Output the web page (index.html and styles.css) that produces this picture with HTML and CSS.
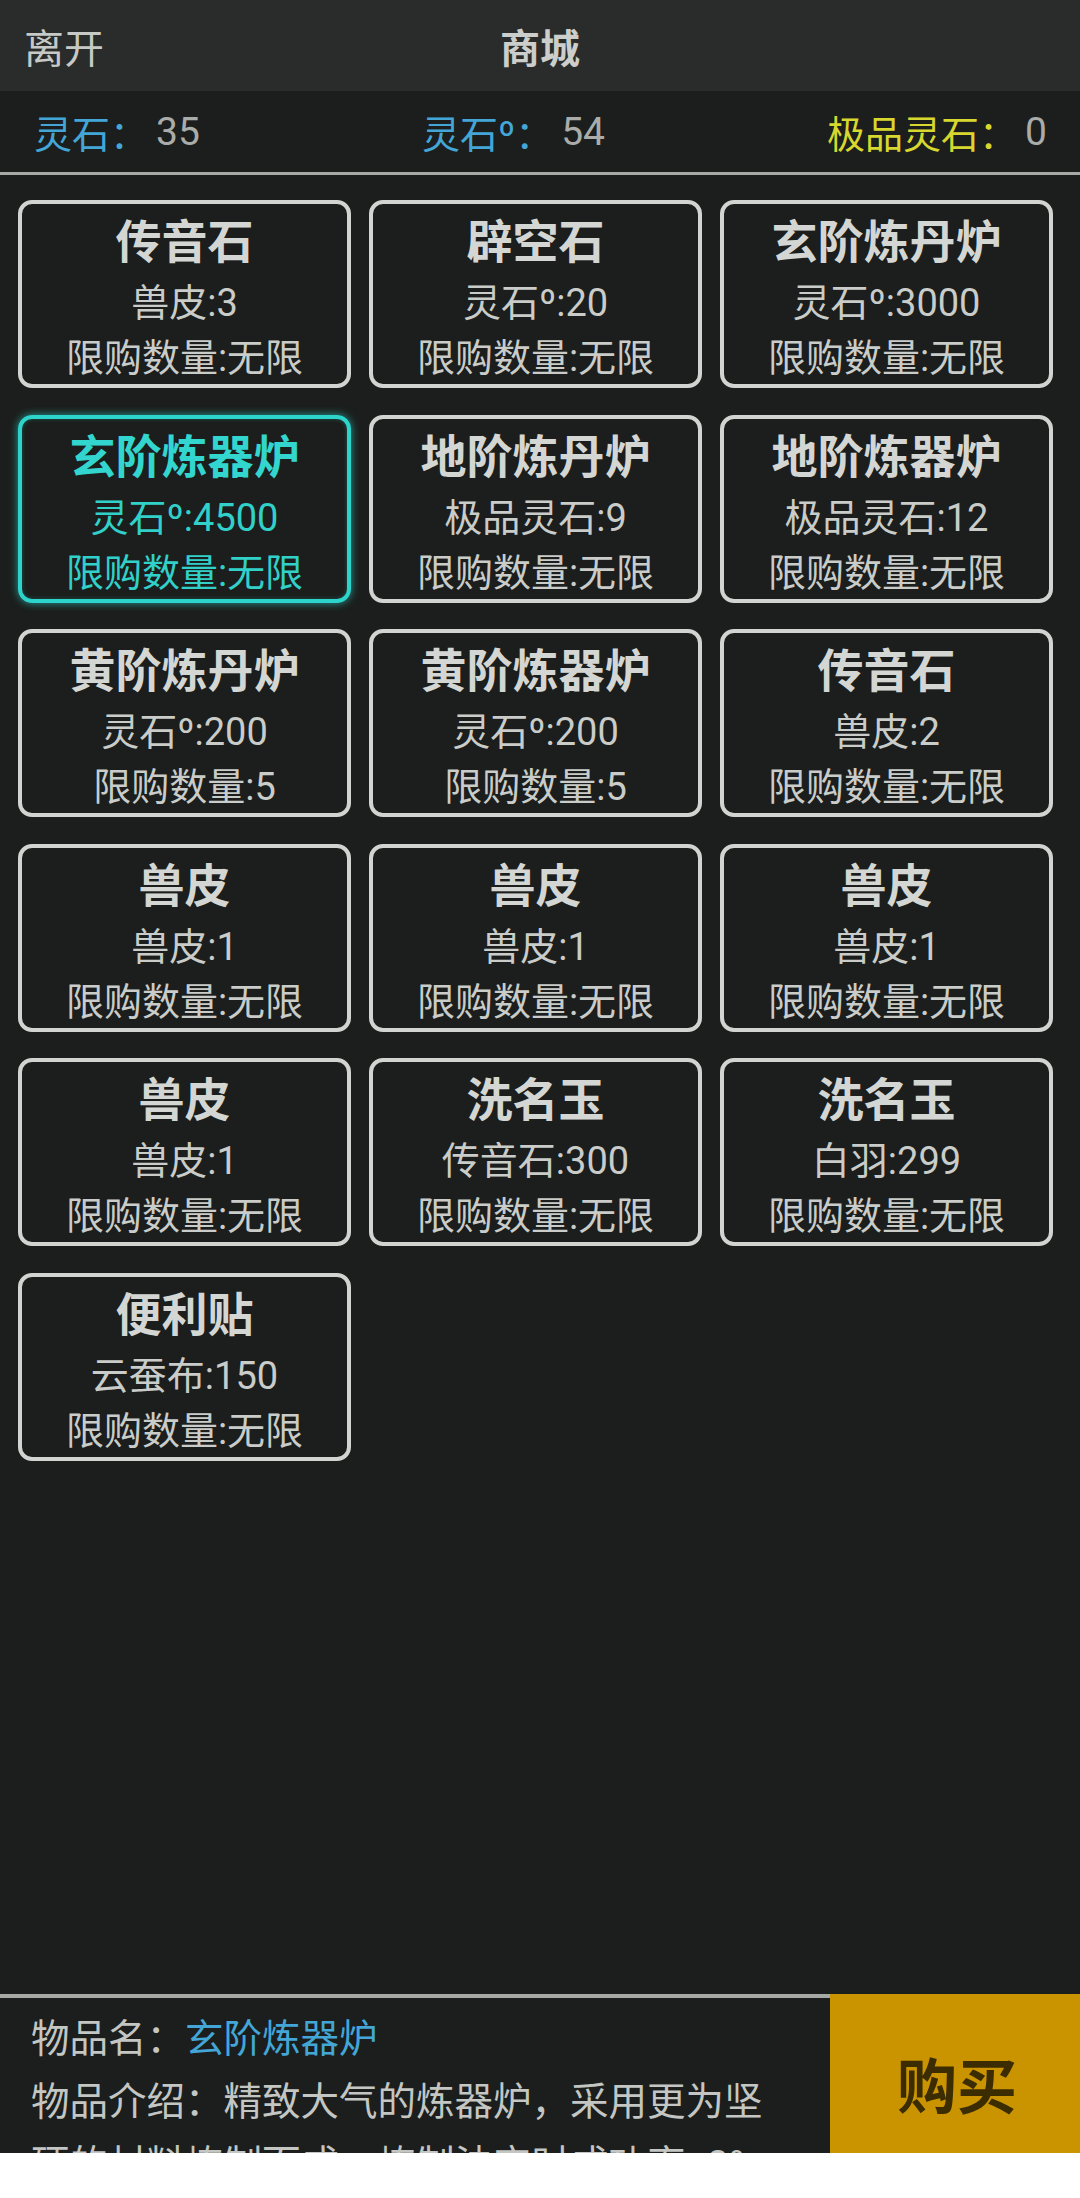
FILE: index.html
```html
<!DOCTYPE html>
<html lang="zh-CN">
<head>
<meta charset="utf-8">
<title>商城</title>
<link rel="stylesheet" href="styles.css">
</head>
<body>
<div class="viewport">
  <div class="app">
    <header class="topbar">
      <div class="back">离开</div>
      <div class="title">商城</div>
      <div class="spacer"></div>
    </header>
    <div class="currency">
      <div class="cur"><span class="lbl blue">灵石：</span><span class="num">35</span></div>
      <div class="cur"><span class="lbl blue">灵石º：</span><span class="num">54</span></div>
      <div class="cur"><span class="lbl yellow">极品灵石：</span><span class="num">0</span></div>
    </div>
    <main class="grid">
      <div class="card"><div class="name">传音石</div><div class="line">兽皮:3</div><div class="line">限购数量:无限</div></div>
      <div class="card"><div class="name">辟空石</div><div class="line">灵石º:20</div><div class="line">限购数量:无限</div></div>
      <div class="card"><div class="name">玄阶炼丹炉</div><div class="line">灵石º:3000</div><div class="line">限购数量:无限</div></div>
      <div class="card selected"><div class="name">玄阶炼器炉</div><div class="line">灵石º:4500</div><div class="line">限购数量:无限</div></div>
      <div class="card"><div class="name">地阶炼丹炉</div><div class="line">极品灵石:9</div><div class="line">限购数量:无限</div></div>
      <div class="card"><div class="name">地阶炼器炉</div><div class="line">极品灵石:12</div><div class="line">限购数量:无限</div></div>
      <div class="card"><div class="name">黄阶炼丹炉</div><div class="line">灵石º:200</div><div class="line">限购数量:5</div></div>
      <div class="card"><div class="name">黄阶炼器炉</div><div class="line">灵石º:200</div><div class="line">限购数量:5</div></div>
      <div class="card"><div class="name">传音石</div><div class="line">兽皮:2</div><div class="line">限购数量:无限</div></div>
      <div class="card"><div class="name">兽皮</div><div class="line">兽皮:1</div><div class="line">限购数量:无限</div></div>
      <div class="card"><div class="name">兽皮</div><div class="line">兽皮:1</div><div class="line">限购数量:无限</div></div>
      <div class="card"><div class="name">兽皮</div><div class="line">兽皮:1</div><div class="line">限购数量:无限</div></div>
      <div class="card"><div class="name">兽皮</div><div class="line">兽皮:1</div><div class="line">限购数量:无限</div></div>
      <div class="card"><div class="name">洗名玉</div><div class="line">传音石:300</div><div class="line">限购数量:无限</div></div>
      <div class="card"><div class="name">洗名玉</div><div class="line">白羽:299</div><div class="line">限购数量:无限</div></div>
      <div class="card"><div class="name">便利贴</div><div class="line">云蚕布:150</div><div class="line">限购数量:无限</div></div>
    </main>
    <footer class="bottom">
      <div class="info">
        <p class="row">物品名：<span class="blue">玄阶炼器炉</span></p>
        <p class="row">物品介绍：精致大气的炼器炉，采用更为坚硬的材料炼制而成，炼制法宝时成功率+3%</p>
      </div>
      <div class="buy">购买</div>
    </footer>
  </div>
</div>
</body>
</html>
```

FILE: styles.css
```css
* { box-sizing: border-box; }
html, body { margin: 0; padding: 0; background: #ffffff; }
body {
  width: 1080px;
  font-family: Roboto, "Noto Sans CJK SC", sans-serif;
}
.viewport {
  width: 1080px;
  height: 2153px;
  overflow: hidden;
  background: #1b1e1c;
}
.app {
  width: 1080px;
  height: 2170px;
  display: flex;
  flex-direction: column;
  background: #1b1e1c;
}
.topbar {
  height: 91px;
  flex: none;
  background: #292c2a;
  display: grid;
  grid-template-columns: 1fr auto 1fr;
  align-items: center;
  padding: 0 24px;
  color: #c6c9c6;
  font-size: 40px;
}
.title { font-weight: bold; color: #cbcecb; }
.currency {
  height: 84px;
  flex: none;
  display: flex;
  justify-content: space-between;
  align-items: center;
  padding: 0 33px 0 34px;
  font-size: 38px;
  border-bottom: 3px solid #a6a9a6;
}
.cur { display: flex; align-items: center; }
.blue { color: #43a6d7; }
.yellow { color: #d7d72f; }
.num { color: #a9aca9; margin-left: 8px; font-size: 39px; }
.grid {
  flex: 1;
  display: grid;
  grid-template-columns: repeat(3, 333px);
  grid-auto-rows: 188px;
  column-gap: 18px;
  row-gap: 26.6px;
  padding: 25px 27px 0 18px;
  align-content: start;
}
.card {
  border: 4px solid #d1d4d1;
  border-radius: 14px;
  text-align: center;
  color: #c9ccc9;
  padding-top: 6px;
  white-space: nowrap;
}
.name {
  font-size: 46px;
  font-weight: bold;
  line-height: 64px;
  color: #d3d6d3;
}
.line {
  font-size: 38px;
  line-height: 55px;
}
.name + .line { margin-top: 2px; }
.card.selected {
  border-color: #2dd4cc;
  box-shadow: 0 0 8px rgba(45, 212, 204, 0.7), inset 0 0 4px rgba(45, 212, 204, 0.3);
  color: #31d0c9;
}
.card.selected .name { color: #33d6ce; }
.bottom {
  height: 176px;
  flex: none;
  display: flex;
}
.info {
  width: 830px;
  border-top: 4px solid #a6a9a6;
  padding: 9px 39px 0 31px;
  color: #c3c6c3;
  font-size: 38.5px;
  line-height: 63px;
  overflow: hidden;
}
.row { margin: 0; }
.buy {
  flex: 1;
  background: #ca9400;
  color: #3b2c02;
  font-size: 60px;
  font-weight: bold;
  display: flex;
  align-items: center;
  justify-content: center;
  padding-left: 4px;
}
```
